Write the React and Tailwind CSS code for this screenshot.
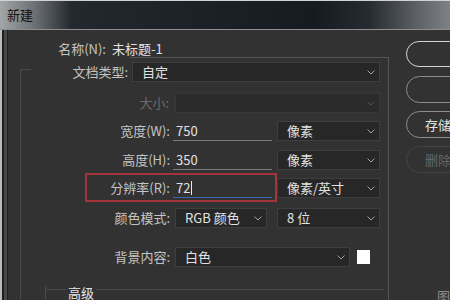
import React from 'react';

const Chevron = ({ dim }) => (
  <svg width="8" height="5" viewBox="0 0 8 5" className="shrink-0">
    <polyline points="0.5,0.5 4,4 7.5,0.5" fill="none" stroke={dim ? '#555555' : '#a0a0a0'} strokeWidth="1" />
  </svg>
);

const Select = ({ value, width, dim }) => (
  <div
    className={`flex h-5 items-center justify-between border pl-[9px] pr-[4px] ${dim ? 'border-[#383838] bg-[#2b2b2b]' : 'border-[#3e3e3e] bg-[#272727]'}`}
    style={{ width }}
  >
    <span className="text-[#e2e2e2]">{value}</span>
    <Chevron dim={dim} />
  </div>
);

const Label = ({ children, width, dim }) => (
  <div className={`shrink-0 text-right ${dim ? 'text-[#6a6a6a]' : 'text-[#c4c4c4]'}`} style={{ width }}>
    {children}
  </div>
);

const Campo = ({ value, active }) => (
  <div className={`flex h-5 w-[99px] items-center border-b pl-[3px] text-[#e2e2e2] ${active ? 'border-[#3a66ad]' : 'border-[#7a7a7a]'}`}>
    {value}
    {active && <span className="ml-px h-[14px] w-px bg-[#e8e8e8]" />}
  </div>
);

export default function App() {
  return (
    <div
      className="flex h-[300px] w-[450px] flex-col overflow-hidden bg-[#323232] text-[13px] leading-4"
      style={{ fontFamily: '"Noto Sans CJK SC", "Noto Sans", sans-serif' }}
    >
      {/* Barra de título */}
      <div className="flex h-[30px] shrink-0 items-center border-t border-b border-t-[#d2d2d2] border-b-[#8e8e8e] bg-[linear-gradient(90deg,#a3a5a7_0%,#6a6e72_8%,#23282e_16%,#161b21_70%,#262b31_82%,#5f6367_93%,#7e8185_100%)] pl-[7px]">
        <span className="text-[#111111]">新建</span>
      </div>

      <div className="flex flex-1">
        {/* Borde izquierdo */}
        <div className="flex shrink-0">
          <div className="w-[2px] bg-[#bcbcbc]" />
          <div className="w-[2px] bg-[#1f1f1f]" />
          <div className="w-[3px] bg-[#4a4a4a]" />
          <div className="w-px bg-[#202020]" />
        </div>

        {/* Formulario */}
        <div className="relative flex w-[381px] shrink-0 flex-col">
          <div className="mt-[11px] flex h-4 items-center">
            <Label width={98}>名称(N):</Label>
            <span className="ml-[6px] text-[#e2e2e2]">未标题-1</span>
          </div>

          <div className="ml-[12px] flex flex-1 flex-col border-r border-[#555555]">
            <div className="ml-[110px] h-px bg-[#555555]" />
            <div className="mt-[11px] flex flex-1 flex-col border-l border-[#4a4a4a]">
              <div className="h-px w-[10px] bg-[#4a4a4a]" />

              <div className="-mt-[8px] flex h-5 items-center">
                <Label width={107}>文档类型:</Label>
                <div className="ml-[4px]"><Select value="自定" width={248} /></div>
              </div>

              <div className="mt-[11px] flex h-5 items-center">
                <Label width={148} dim>大小:</Label>
                <div className="ml-[6px]"><Select value="" width={205} dim /></div>
              </div>

              <div className="mt-[8px] flex h-5 items-center">
                <Label width={149}>宽度(W):</Label>
                <div className="ml-[3px]"><Campo value="750" /></div>
                <div className="ml-[5px]"><Select value="像素" width={103} /></div>
              </div>

              <div className="mt-[9px] flex h-5 items-center">
                <Label width={149}>高度(H):</Label>
                <div className="ml-[3px]"><Campo value="350" /></div>
                <div className="ml-[5px]"><Select value="像素" width={103} /></div>
              </div>

              <div className="mt-[8px] flex h-5 items-center">
                <Label width={149}>分辨率(R):</Label>
                <div className="ml-[3px]"><Campo value="72" active /></div>
                <div className="ml-[5px]"><Select value="像素/英寸" width={103} /></div>
              </div>

              <div className="mt-[10px] flex h-5 items-center">
                <Label width={149}>颜色模式:</Label>
                <div className="ml-[5px]"><Select value="RGB 颜色" width={92} /></div>
                <div className="ml-[10px]"><Select value="8 位" width={103} /></div>
              </div>

              <div className="mt-[19px] flex h-5 items-center">
                <Label width={149}>背景内容:</Label>
                <div className="ml-[5px]"><Select value="白色" width={175} /></div>
                <div className="ml-[7px] h-[14px] w-[13px] bg-white" />
              </div>

              <div className="mt-[19px] ml-[24px] flex flex-1 items-start border-l border-[#4a4a4a]">
                <div className="mt-[3px] h-px w-[20px] bg-[#4a4a4a]" />
                <span className="px-[2px] leading-[14px] text-[#e6e6e6]">高级</span>
                <div className="mt-[3px] h-px w-[288px] bg-[#4a4a4a]" />
              </div>
            </div>
          </div>

          {/* Marca roja */}
          <div className="absolute top-[143px] left-[77px] h-[29px] w-[192px] border-2 border-[#a3343a]" />
        </div>

        {/* Botones */}
        <div className="flex w-[61px] shrink-0 flex-col pl-[17px]">
          <div className="mt-[11px] h-[26px] w-[80px] shrink-0 rounded-full border border-[#d4d4d4]" />
          <div className="mt-[9px] h-[27px] w-[80px] shrink-0 rounded-full border border-[#8c8c8c]" />
          <div className="mt-[8px] flex h-[27px] w-[80px] shrink-0 items-center rounded-full border border-[#8c8c8c] pl-[18px] text-[#e2e2e2]">
            存储...
          </div>
          <div className="mt-[8px] flex h-[27px] w-[80px] shrink-0 items-center rounded-full border border-[#444444] pl-[18px] text-[#666666]">
            删除...
          </div>
          <div className="mt-auto mb-[-4px] ml-[31px] text-[#8a8a8a]">图</div>
        </div>
      </div>
    </div>
  );
}
